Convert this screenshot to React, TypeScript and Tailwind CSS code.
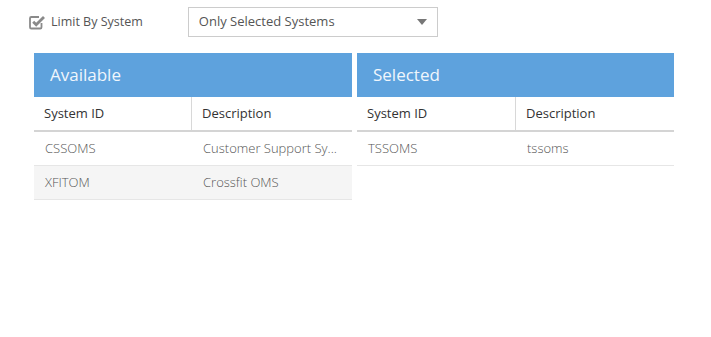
import React from "react";

const Check = () => (
  <svg width="17" height="17" viewBox="0 0 17 17" className="block">
    <path d="M12.5 9V13.2Q12.5 14.5 11.2 14.5H2.3Q1 14.5 1 13.2V4.3Q1 3 2.3 3H10" fill="none" stroke="#8a8a8a" strokeWidth="1.8" />
    <path d="M4.2 7.8L7.2 10.8L15 3" fill="none" stroke="#8a8a8a" strokeWidth="2.8" />
  </svg>
);

type Row = { id: string; desc: string };

const Panel = ({ title, rows, w, col }: { title: string; rows: Row[]; w: string; col: string }) => (
  <div className={w}>
    <div className="h-[44px] bg-[#5ea2dd] flex items-center pl-[16px] text-[17px] text-[#f0f6fc]">{title}</div>
    <div className="flex h-[35px] border-b-2 border-[#d4d4d4] text-[13px] text-[#333]">
      <div className={`${col} border-r border-[#d8d8d8] flex items-center pl-[10px]`}>System ID</div>
      <div className="flex-1 flex items-center pl-[10px]">Description</div>
    </div>
    {rows.map((r, i) => (
      <div
        key={r.id}
        className={`flex h-[34px] border-b border-[#e6e6e6] text-[13px] font-light text-[#555] ${i % 2 === 1 ? "bg-[#f5f5f5]" : "bg-white"}`}
      >
        <div className={`${col} flex items-center pl-[11px]`}>{r.id}</div>
        <div className="flex-1 flex items-center pl-[11px] whitespace-nowrap overflow-hidden">{r.desc}</div>
      </div>
    ))}
  </div>
);

export default function App() {
  return (
    <div className="w-[711px] h-[337px] bg-white" style={{ fontFamily: '"Open Sans", sans-serif' }}>
      <div className="flex items-center pt-[7px] pl-[29px]">
        <Check />
        <span className="ml-[5px] text-[12.5px] text-[#555]">Limit By System</span>
        <div className="ml-[45px] w-[250px] h-[30px] border border-[#cccccc] flex items-center justify-between pl-[10px] pr-[10px] text-[13px] text-[#555]">
          <span>Only Selected Systems</span>
          <svg width="10" height="6" viewBox="0 0 10 6">
            <path d="M0 0H10L5 6Z" fill="#777" />
          </svg>
        </div>
      </div>
      <div className="flex pl-[34px] mt-[16px] gap-[5px]">
        <Panel
          title="Available"
          w="w-[318px]"
          col="w-[158px]"
          rows={[
            { id: "CSSOMS", desc: "Customer Support Sy..." },
            { id: "XFITOM", desc: "Crossfit OMS" },
          ]}
        />
        <Panel title="Selected" w="w-[317px]" col="w-[159px]" rows={[{ id: "TSSOMS", desc: "tssoms" }]} />
      </div>
    </div>
  );
}
